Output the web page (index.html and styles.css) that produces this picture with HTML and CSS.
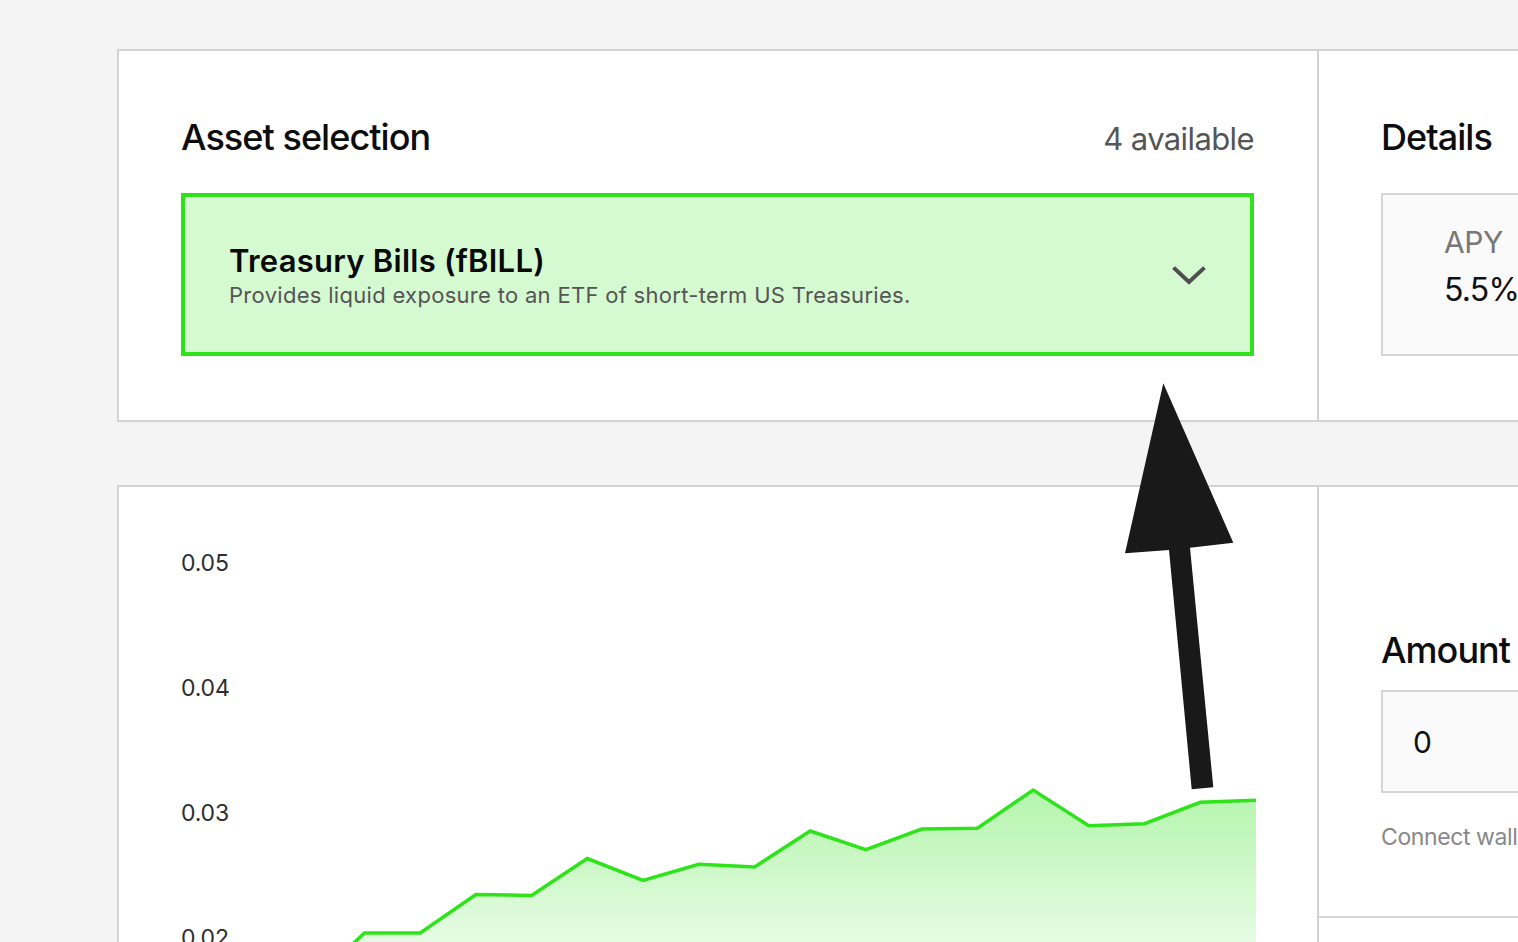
FILE: index.html
```html
<!DOCTYPE html>
<html lang="en">
<head>
<meta charset="utf-8">
<title>Deposit</title>
<link rel="stylesheet" href="styles.css">
</head>
<body>
<main class="page">
  <section class="card">
    <div class="col-main">
      <div class="head-row">
        <h2 class="heading">Asset selection</h2>
        <span class="count">4 available</span>
      </div>
      <button class="select" type="button">
        <span class="select-text">
          <span class="select-title">Treasury Bills (fBILL)</span>
          <span class="select-sub">Provides liquid exposure to an ETF of short-term US Treasuries.</span>
        </span>
        <svg class="chevron" width="34" height="20" viewBox="0 0 34 20" aria-hidden="true">
          <polyline points="3,3 17,16 31,3" fill="none" stroke="#4f4f4f" stroke-width="4" stroke-linecap="square"/>
        </svg>
      </button>
    </div>
    <aside class="col-side">
      <h2 class="heading">Details</h2>
      <div class="stat">
        <span class="stat-label">APY</span>
        <span class="stat-value">5.5%</span>
      </div>
    </aside>
  </section>

  <section class="card">
    <div class="col-main chart-col">
      <div class="chart">
        <div class="y-axis">
          <span>0.05</span>
          <span>0.04</span>
          <span>0.03</span>
          <span>0.02</span>
          <span>0.01</span>
        </div>
        <svg class="plot" width="1003" height="560" viewBox="0 0 1003 560" aria-hidden="true">
          <defs>
            <linearGradient id="fillGrad" gradientUnits="userSpaceOnUse" x1="0" y1="239" x2="0" y2="470">
              <stop offset="0" stop-color="#2fe31b" stop-opacity="0.36"/>
              <stop offset="1" stop-color="#2fe31b" stop-opacity="0"/>
            </linearGradient>
          </defs>
          <polygon fill="url(#fillGrad)" points="0,478 55.7,435 111.4,382 167.2,382 222.9,343.5 278.6,344.5 334.3,307.5 390,329.5 445.8,313.3 501.5,316 557.2,280 612.9,298.7 668.6,278 724.4,277.3 780.1,239 835.8,274.7 891.5,272.7 947.2,251.3 1003,249.3 1003,560 0,560"/>
          <polyline fill="none" stroke="#2fe31b" stroke-width="3.5" stroke-linejoin="miter" points="0,478 55.7,435 111.4,382 167.2,382 222.9,343.5 278.6,344.5 334.3,307.5 390,329.5 445.8,313.3 501.5,316 557.2,280 612.9,298.7 668.6,278 724.4,277.3 780.1,239 835.8,274.7 891.5,272.7 947.2,251.3 1003,249.3"/>
        </svg>
      </div>
    </div>
    <aside class="col-side side-form">
      <div class="form-block">
        <h2 class="heading">Amount to deposit</h2>
        <div class="amount-input">0</div>
        <p class="hint">Connect wallet to see your balance</p>
      </div>
      <div class="form-foot"></div>
    </aside>
  </section>
</main>

<svg class="annotation" width="1518" height="942" viewBox="0 0 1518 942" aria-hidden="true">
  <polygon fill="#191919" points="1163.3,383.3 1233.3,542.7 1190,547.7 1213.3,787.3 1191.7,789.3 1169,550 1125,553.3"/>
</svg>
</body>
</html>
```

FILE: styles.css
```css
* { box-sizing: border-box; }

html, body {
  margin: 0;
  height: 100%;
}

body {
  background: #f4f4f4;
  overflow: hidden;
  font-family: Inter, "Liberation Sans", sans-serif;
  color: #0d0d0d;
  position: relative;
}

.page {
  display: flex;
  flex-direction: column;
  gap: 63px;
  padding: 49px 0 0 117px;
  width: max-content;
}

.card {
  display: grid;
  grid-template-columns: 1198px 420px;
  background: #ffffff;
  border: 2px solid #d3d3d3;
}

.col-main {
  padding: 64px 63px 64px 62px;
}

.col-side {
  border-left: 2px solid #d3d3d3;
  padding: 64px 0 64px 62px;
}

.heading {
  margin: 0;
  font-size: 36px;
  line-height: 44px;
  font-weight: 500;
  letter-spacing: -0.95px;
  white-space: nowrap;
}

.head-row {
  display: flex;
  justify-content: space-between;
  align-items: baseline;
}

.count {
  font-size: 31px;
  color: #555555;
  letter-spacing: -0.6px;
}

.select {
  margin-top: 34px;
  width: 100%;
  height: 163px;
  display: flex;
  align-items: center;
  justify-content: space-between;
  padding: 7px 44px 0;
  background: #d5f9d0;
  border: 4px solid #2fe31b;
  font: inherit;
  text-align: left;
  color: inherit;
  cursor: pointer;
}

.select-text {
  display: flex;
  flex-direction: column;
}

.select-title {
  font-size: 31px;
  line-height: 34px;
  font-weight: 600;
  letter-spacing: 0.25px;
  color: #0a0a0a;
}

.select-sub {
  font-size: 22px;
  line-height: 34px;
  color: #555555;
  letter-spacing: 0.3px;
}

.chevron {
  display: block;
  margin-top: -5px;
  flex-shrink: 0;
}

.stat {
  margin-top: 34px;
  width: 340px;
  height: 163px;
  background: #fafafa;
  border: 2px solid #d6d6d6;
  padding: 24px 0 0 61px;
  display: flex;
  flex-direction: column;
}

.stat-label {
  font-size: 30px;
  line-height: 47px;
  color: #777777;
  letter-spacing: -0.4px;
}

.stat-value {
  font-size: 32px;
  line-height: 47px;
  color: #111111;
  letter-spacing: -0.8px;
}

.chart {
  display: flex;
}

.y-axis {
  width: 72px;
  flex-shrink: 0;
  display: flex;
  flex-direction: column;
  gap: 101px;
  font-size: 23px;
  line-height: 24px;
  color: #2e2e2e;
  letter-spacing: -0.2px;
}

.plot {
  display: block;
  flex-shrink: 0;
  overflow: visible;
}

.side-form {
  padding: 0;
  display: flex;
  flex-direction: column;
}

.form-block {
  padding: 141px 0 65px 62px;
}

.amount-input {
  margin-top: 18px;
  width: 340px;
  height: 103px;
  background: #fafafa;
  border: 2px solid #d6d6d6;
  display: flex;
  align-items: center;
  padding-left: 30px;
  font-size: 30px;
  color: #111111;
}

.hint {
  margin: 30px 0 0;
  font-size: 23px;
  line-height: 28px;
  color: #888888;
  letter-spacing: -0.4px;
  white-space: nowrap;
}

.form-foot {
  border-top: 2px solid #d6d6d6;
  height: 200px;
}

.annotation {
  position: absolute;
  left: 0;
  top: 0;
  pointer-events: none;
}
```
